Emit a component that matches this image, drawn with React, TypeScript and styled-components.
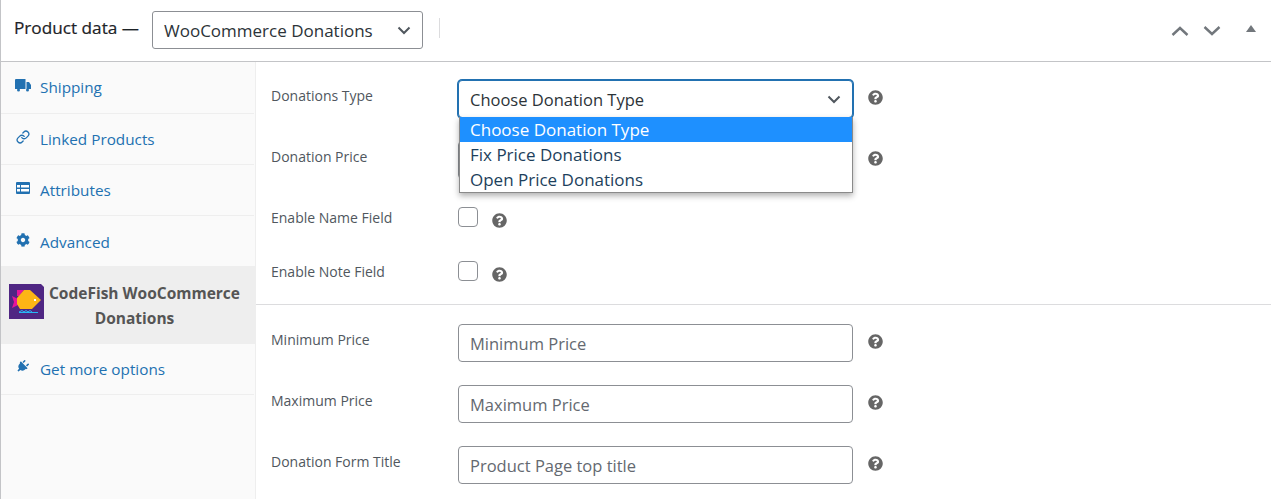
import React from 'react';
import styled, { createGlobalStyle } from 'styled-components';
import { FaCog, FaPlug, FaQuestionCircle } from 'react-icons/fa';
import { Link as LinkIcon } from 'lucide-react';

const GlobalStyle = createGlobalStyle`
  html, body {
    margin: 0;
    padding: 0;
    background: #fff;
    font-family: "Open Sans", "Noto Sans", "Liberation Sans", sans-serif;
    color: #3c434a;
  }
`;

const Box = styled.div`
  width: 1271px;
  height: 499px;
  overflow: hidden;
  border-left: 1px solid #c3c4c7;
  box-sizing: border-box;
  background: #fff;
`;

const Header = styled.div`
  display: flex;
  align-items: center;
  height: 62px;
  box-sizing: border-box;
  border-bottom: 1px solid #c3c4c7;
  padding: 0 13px;
`;

const Title = styled.h2`
  margin: 0 13px 6px 0;
  font-size: 17.2px;
  font-weight: 400;
  color: #1d2327;
  -webkit-text-stroke: 0.2px #1d2327;
  white-space: nowrap;
`;

const Chevron = styled.svg`
  display: block;
  flex: none;
`;

const ProductSelect = styled.div`
  display: flex;
  align-items: center;
  justify-content: space-between;
  width: 271px;
  height: 38px;
  margin-bottom: 1px;
  box-sizing: border-box;
  border: 1px solid #8c8f94;
  border-radius: 3px;
  padding: 0 11px;
  font-size: 17px;
  color: #2c3338;
`;

const Sep = styled.div`
  width: 1px;
  height: 20px;
  background: #dcdcde;
  margin-left: 16px;
  margin-bottom: 6px;
`;

const Handles = styled.div`
  display: flex;
  align-items: center;
  margin-left: auto;
  margin-right: 2px;
  gap: 14px;
  color: #72777c;
`;

const Toggle = styled.div`
  width: 0;
  height: 0;
  margin-left: 11px;
  margin-bottom: 4px;
  border-left: 5px solid transparent;
  border-right: 5px solid transparent;
  border-bottom: 7px solid #72777c;
`;

const Body = styled.div`
  display: flex;
  height: 437px;
`;

const Sidebar = styled.ul`
  list-style: none;
  margin: 0;
  padding: 0;
  width: 255px;
  flex: none;
  box-sizing: border-box;
  background: #fafafa;
  border-right: 1px solid #eee;
`;

const Tab = styled.li`
  display: flex;
  align-items: center;
  height: 51px;
  padding: 0 0 1px 13px;
  margin-right: 1px;
  box-sizing: border-box;
  border-bottom: 1px solid #eee;
  color: #2271b1;
  font-size: 15.3px;
  &:first-child {
    height: 52px;
  }
  &:nth-child(4) {
    padding-top: 1px;
    padding-bottom: 0;
  }
`;

const TabIcon = styled.span`
  display: flex;
  align-items: center;
  justify-content: center;
  width: 17px;
  height: 16px;
  margin-right: 9px;
  margin-top: -4px;
  flex: none;
  font-size: 14px;
`;

const PlugGlyph = styled(FaPlug)`
  transform: rotate(45deg);
  font-size: 13px;
`;

const ActiveTab = styled.li`
  display: flex;
  align-items: center;
  height: 78px;
  margin-top: -1px;
  box-sizing: border-box;
  padding-left: 8px;
  background: #eee;
  color: #555;
  font-size: 15.5px;
  font-weight: 700;
  line-height: 25px;
  text-align: center;
`;

const ActiveLabel = styled.span`
  width: 195px;
  margin-left: 3px;
  padding-top: 2px;
`;

const ActiveSecondLine = styled.span`
  display: block;
  padding-right: 20px;
`;

const LogoSvg = styled.svg`
  flex: none;
  margin-bottom: 8px;
`;

const Panel = styled.div`
  flex: 1;
  padding-top: 18px;
`;

const Group = styled.div`
  border-bottom: 1px solid #dcdcde;
`;

const SecondGroup = styled.div`
  padding-top: 19px;
`;

const FieldRow = styled.div`
  display: flex;
  align-items: flex-start;
  height: 61px;
`;

const CheckRow = styled(FieldRow)`
  height: 54px;
  &:last-child {
    height: 48px;
  }
`;

const Label = styled.label`
  width: 187px;
  flex: none;
  margin-left: 15px;
  padding-top: 6px;
  font-size: 14px;
  color: #50575e;
`;

const Control = styled.div<{ $focus?: boolean }>`
  position: relative;
  display: flex;
  align-items: center;
  justify-content: space-between;
  width: 395px;
  height: 38px;
  box-sizing: border-box;
  padding: 0 11px;
  border: 1px solid ${({ $focus }) => ($focus ? '#2271b1' : '#8c8f94')};
  border-radius: 4px;
  box-shadow: ${({ $focus }) => ($focus ? '0 0 0 1px #2271b1' : 'none')};
  font-size: 16.5px;
  color: ${({ $focus }) => ($focus ? '#2c3338' : '#646970')};
  background: #fff;
`;

const Dropdown = styled.ul`
  position: absolute;
  top: 36px;
  left: 0;
  width: 394px;
  margin: 0;
  padding: 0;
  list-style: none;
  background: #fff;
  box-sizing: border-box;
  border: 1px solid #8a8a8a;
  border-top: none;
  box-shadow: 0 3px 6px rgba(0, 0, 0, 0.3);
  z-index: 2;
`;

const Option = styled.li<{ $selected?: boolean }>`
  height: 25px;
  line-height: 26px;
  padding-left: 10px;
  font-size: 17px;
  color: ${({ $selected }) => ($selected ? '#fff' : '#1d3f5c')};
  background: ${({ $selected }) => ($selected ? '#1e90ff' : '#fff')};
`;

const Help = styled(FaQuestionCircle)<{ $near?: boolean }>`
  flex: none;
  margin-left: ${({ $near }) => ($near ? '14px' : '15px')};
  margin-top: ${({ $near }) => ($near ? '11px' : '10px')};
  font-size: 15px;
  color: #666;
`;

const Check = styled.span`
  width: 20px;
  height: 20px;
  margin-top: 5px;
  flex: none;
  box-sizing: border-box;
  border: 1px solid #8c8f94;
  border-radius: 4px;
  background: #fff;
`;

const TruckGlyph = () => (
  <svg width="16" height="13" viewBox="0 0 16 13">
    <path d="M0 1Q0 0 1 0H10.500V10H0Z" fill="#2271b1" />
    <path d="M11.500 3H14L16 6V10H11.500Z" fill="#2271b1" />
    <circle cx="3.500" cy="11" r="1.500" fill="#2271b1" />
    <circle cx="12.500" cy="11" r="1.500" fill="#2271b1" />
  </svg>
);

const AttributesGlyph = () => (
  <svg width="14" height="12" viewBox="0 0 14 12">
    <rect width="14" height="12" rx="1" fill="#2271b1" />
    <rect x="1" y="3" width="3" height="2.500" fill="#fff" />
    <rect x="5" y="3" width="8" height="2.500" fill="#fff" />
    <rect x="1" y="7" width="3" height="2.500" fill="#fff" />
    <rect x="5" y="7" width="8" height="2.500" fill="#fff" />
  </svg>
);

const FishLogo = () => (
  <LogoSvg width="35" height="35" viewBox="0 0 35 35">
    <path d="M0 0H32L35 3V35H0Z" fill="#4f2683" />
    <path d="M8 6H15L10 12H8Z" fill="#e6149a" />
    <path d="M3 12L9 15V21L3 24L5 18Z" fill="#e6149a" />
    <path d="M15 6H21L32 16L23 25H11L8 20V14Z" fill="#fdb515" />
    <rect x="25" y="15" width="2" height="2" fill="#fff" />
    <path d="M10 28L13 26.500L15 28L17 26.500L19 28L21 26.500L23 28" fill="none" stroke="#29b6f6" strokeWidth="1" />
    <rect x="10" y="28" width="19" height="1" fill="#29b6f6" />
  </LogoSvg>
);

const ArrowDown = ({ size = 14 }: { size?: number }) => (
  <Chevron width={size} height={size} viewBox="0 0 14 14">
    <path d="M1.500 4.500L7 10L12.500 4.500" fill="none" stroke="#50575e" strokeWidth="2" />
  </Chevron>
);

const HandleUp = () => (
  <Chevron width="18" height="12" viewBox="0 0 18 12">
    <path d="M1.500 10L9 3L16.500 10" fill="none" stroke="#72777c" strokeWidth="2.400" />
  </Chevron>
);

const HandleDown = () => (
  <Chevron width="18" height="12" viewBox="0 0 18 12">
    <path d="M1.500 2L9 9L16.500 2" fill="none" stroke="#72777c" strokeWidth="2.400" />
  </Chevron>
);

const tabs = [
  { label: 'Shipping', icon: <TruckGlyph /> },
  { label: 'Linked Products', icon: <LinkIcon size={14} strokeWidth={2.2} /> },
  { label: 'Attributes', icon: <AttributesGlyph /> },
  { label: 'Advanced', icon: <FaCog /> },
];

export default function App() {
  return (
    <Box>
      <GlobalStyle />
      <Header>
        <Title>Product data —</Title>
        <ProductSelect>
          WooCommerce Donations
          <ArrowDown />
        </ProductSelect>
        <Sep />
        <Handles>
          <HandleUp />
          <HandleDown />
          <Toggle />
        </Handles>
      </Header>
      <Body>
        <Sidebar>
          {tabs.map((tab) => (
            <Tab key={tab.label}>
              <TabIcon>{tab.icon}</TabIcon>
              {tab.label}
            </Tab>
          ))}
          <ActiveTab>
            <FishLogo />
            <ActiveLabel>
              CodeFish WooCommerce
              <ActiveSecondLine>Donations</ActiveSecondLine>
            </ActiveLabel>
          </ActiveTab>
          <Tab>
            <TabIcon>
              <PlugGlyph />
            </TabIcon>
            Get more options
          </Tab>
        </Sidebar>
        <Panel>
          <Group>
            <FieldRow>
              <Label>Donations Type</Label>
              <Control $focus>
                Choose Donation Type
                <ArrowDown />
                <Dropdown>
                  <Option $selected>Choose Donation Type</Option>
                  <Option>Fix Price Donations</Option>
                  <Option>Open Price Donations</Option>
                </Dropdown>
              </Control>
              <Help />
            </FieldRow>
            <FieldRow>
              <Label>Donation Price</Label>
              <Control />
              <Help />
            </FieldRow>
            <CheckRow>
              <Label>Enable Name Field</Label>
              <Check />
              <Help $near />
            </CheckRow>
            <CheckRow>
              <Label>Enable Note Field</Label>
              <Check />
              <Help $near />
            </CheckRow>
          </Group>
          <SecondGroup>
            <FieldRow>
              <Label>Minimum Price</Label>
              <Control>Minimum Price</Control>
              <Help />
            </FieldRow>
            <FieldRow>
              <Label>Maximum Price</Label>
              <Control>Maximum Price</Control>
              <Help />
            </FieldRow>
            <FieldRow>
              <Label>Donation Form Title</Label>
              <Control>Product Page top title</Control>
              <Help />
            </FieldRow>
          </SecondGroup>
        </Panel>
      </Body>
    </Box>
  );
}
